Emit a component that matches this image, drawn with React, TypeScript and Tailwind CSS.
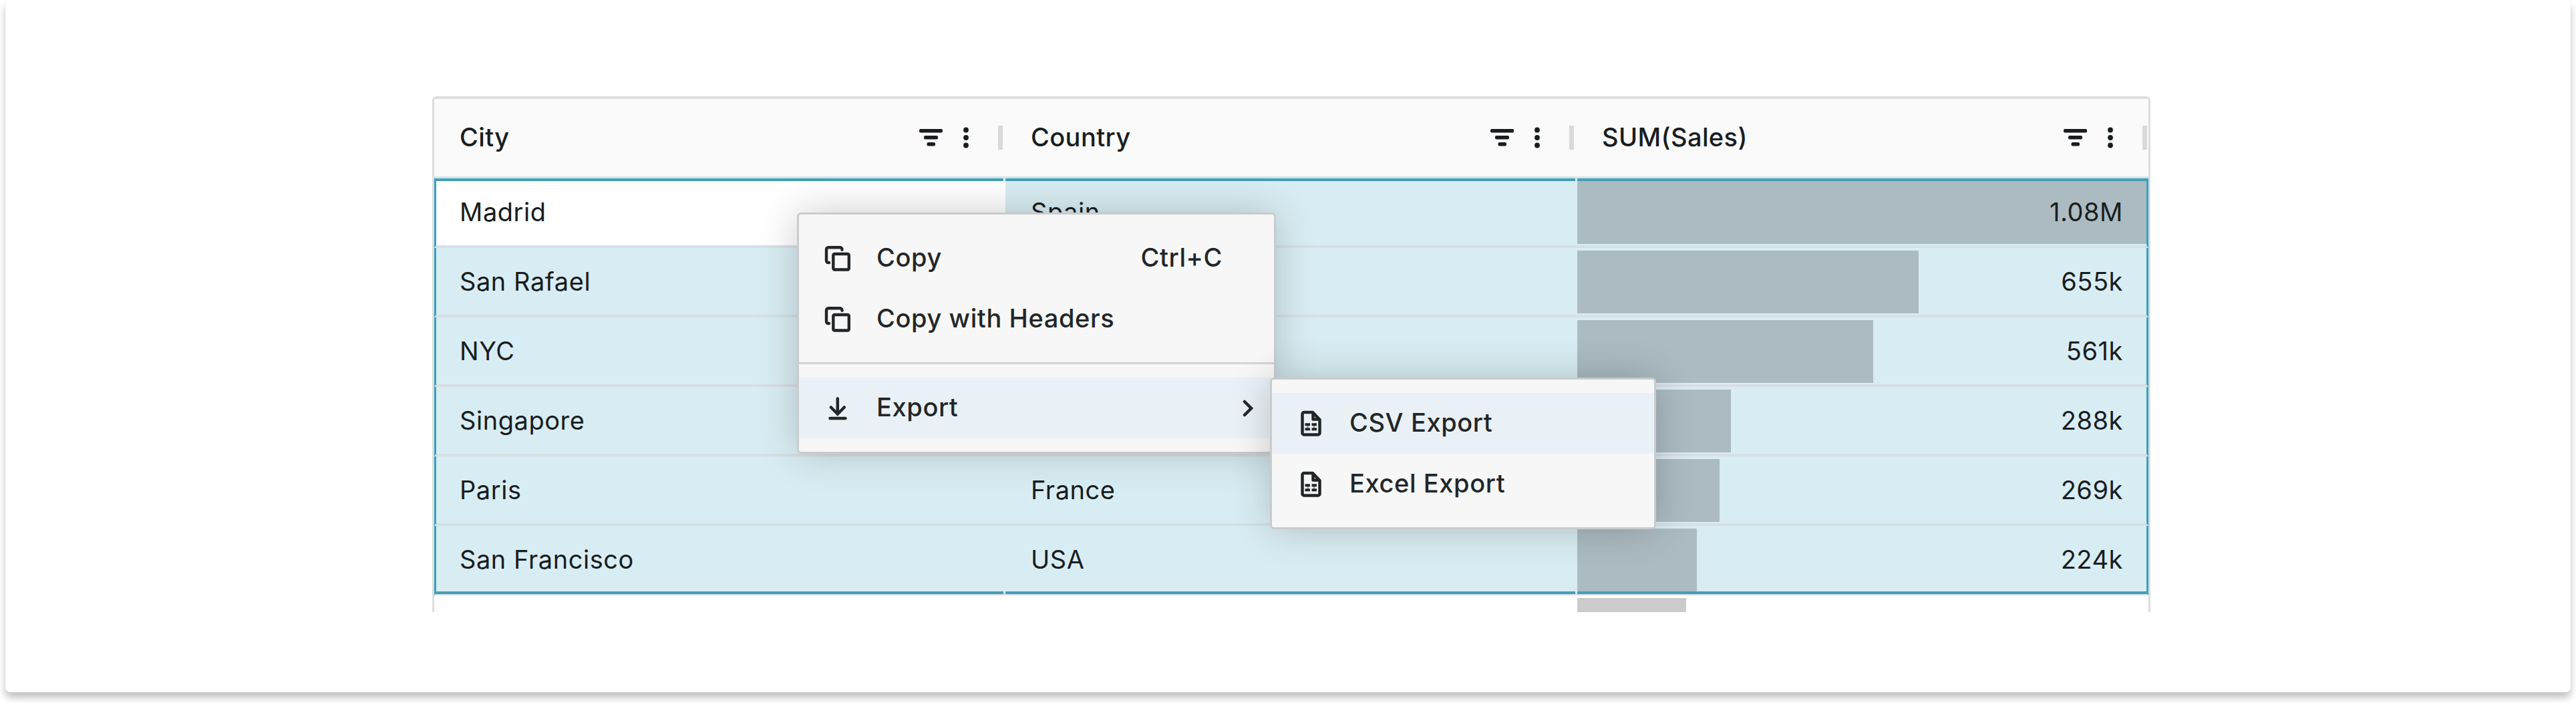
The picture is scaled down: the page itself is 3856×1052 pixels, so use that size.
import React from "react";

const columns = ["City", "Country", "SUM(Sales)"];

const rows = [
  { city: "Madrid", country: "Spain", sales: "1.08M", bar: 852 },
  { city: "San Rafael", country: "USA", sales: "655k", bar: 511 },
  { city: "NYC", country: "USA", sales: "561k", bar: 443 },
  { city: "Singapore", country: "Singapore", sales: "288k", bar: 230 },
  { city: "Paris", country: "France", sales: "269k", bar: 213 },
  { city: "San Francisco", country: "USA", sales: "224k", bar: 179 },
];

const FilterIcon = () => (
  <svg width="36" height="28" viewBox="0 0 36 28" fill="#181d1f">
    <rect x="0" y="1" width="35" height="5.5" rx="2" />
    <rect x="7" y="11" width="21" height="5.5" rx="2" />
    <rect x="11.5" y="21" width="12.5" height="5.5" rx="2" />
  </svg>
);

const DotsIcon = () => (
  <svg width="8" height="32" viewBox="0 0 8 32" fill="#181d1f">
    <circle cx="4" cy="4.5" r="3.9" />
    <circle cx="4" cy="16" r="3.9" />
    <circle cx="4" cy="27.5" r="3.9" />
  </svg>
);

const CopyIcon = () => (
  <svg
    width="40"
    height="40"
    viewBox="0 0 40 40"
    fill="none"
    stroke="#222628"
    strokeWidth="4.4"
    strokeLinecap="round"
  >
    <rect x="13.3" y="13" width="23.5" height="23.5" rx="2" />
    <path d="M7 26H6a3 3 0 0 1-3-3V6.300a3 3 0 0 1 3-3h17.500a3 3 0 0 1 3 3v.5" />
  </svg>
);

const DownloadIcon = () => (
  <svg
    width="40"
    height="40"
    viewBox="0 0 40 40"
    fill="none"
    stroke="#222628"
    strokeWidth="4.5"
    strokeLinecap="round"
  >
    <path d="M19.8 5.5v22M9.8 18.5l10 10 10-10M8.5 35h23" />
  </svg>
);

const SheetIcon = () => (
  <svg
    width="40"
    height="40"
    viewBox="0 0 40 40"
    fill="none"
    stroke="#222628"
    strokeWidth="4.5"
    strokeLinejoin="round"
  >
    <path d="M10 3h13l10.5 11v20a2.5 2.5 0 0 1-2.5 2.5H10A2.5 2.5 0 0 1 7.5 34V5.5A2.5 2.5 0 0 1 10 3Z" />
    <path d="M23.5 4v9.5H33" />
    <path d="M11.5 21.3H19M21.5 21.3H29M11.5 28.3H19M21.5 28.3H29" strokeWidth="4" />
    <path d="M15.5 20v10M25 20v10" strokeWidth="2" strokeOpacity="0.45" />
  </svg>
);

const ChevronIcon = () => (
  <svg
    width="18"
    height="26"
    viewBox="0 0 18 26"
    fill="none"
    stroke="#222628"
    strokeWidth="4.5"
    strokeLinecap="round"
  >
    <path d="M4 3l10 10L4 23" />
  </svg>
);

// teal edge of the selected range, broken between the columns
const RangeEdge = () => (
  <>
    <div className="h-1 w-[852px] bg-[#439fb5]" />
    <div className="h-1 w-[853px] bg-[#439fb5]" />
    <div className="h-1 flex-1 bg-[#439fb5]" />
  </>
);

type MenuItemProps = {
  icon: React.ReactNode;
  label: string;
  shortcut?: string;
  active?: boolean;
  arrow?: boolean;
};

const MenuItem = ({ icon, label, shortcut, active, arrow }: MenuItemProps) => (
  <div
    className={
      active
        ? "flex h-[91px] items-center bg-[#e9f1f6] pl-[38px] pr-[30px]"
        : "flex h-[91px] items-center pl-[38px] pr-[77px]"
    }
  >
    {icon}
    <span className="ml-[38px] pb-[3px]">{label}</span>
    {shortcut && <span className="ml-auto pb-[3px]">{shortcut}</span>}
    {arrow && (
      <span className="ml-auto">
        <ChevronIcon />
      </span>
    )}
  </div>
);

const App = () => {
  return (
    <div className="h-[1052px] w-[3856px] overflow-hidden bg-white px-2 font-['Inter',sans-serif] text-[38px] leading-none tracking-[0.55px] text-[#181d1f]">
      <div className="relative h-[1036px] rounded-lg bg-white pl-[639px] pt-[144px] shadow-[0_8px_12px_rgba(0,0,0,0.25)]">
        <div className="h-[772px] w-[2572px] overflow-hidden rounded-t-md border-x-3 border-t-4 border-[#dddddd]">
          <div className="flex h-[119px] border-b-3 border-[#cfe3ea] bg-[#fafafa] font-medium tracking-[0.4px]">
            {columns.map((name) => (
              <div
                key={name}
                className="flex w-[855px] shrink-0 items-center pl-[38px] pr-1 last:w-[858px]"
              >
                <span className="pb-[3px]">{name}</span>
                <div className="ml-auto flex items-center">
                  <FilterIcon />
                  <span className="ml-[30px]">
                    <DotsIcon />
                  </span>
                  <span className="ml-11 h-9 w-[7px] bg-[#d9d9d9]" />
                </div>
              </div>
            ))}
          </div>
          <div className="relative">
            {rows.map((row, index) => (
              <div
                key={row.city}
                className="flex h-[104px] border-x-3 border-b-4 border-x-[#35a3bd] border-b-[#d8dfe4] bg-[#d8edf3]"
              >
                <div
                  className={
                    index === 0
                      ? "flex w-[852px] items-center bg-white pl-[35px]"
                      : "flex w-[852px] items-center pl-[35px]"
                  }
                >
                  <span className="pb-px">{row.city}</span>
                </div>
                <div className="flex w-[856px] items-center pl-[38px]">
                  <span className="pb-px">{row.country}</span>
                </div>
                <div className="grid flex-1 items-center">
                  <div
                    className="col-start-1 row-start-1 mt-0.5 h-[94px] max-w-full bg-[#abbbc1]"
                    style={{ width: row.bar }}
                  />
                  <span className="col-start-1 row-start-1 pb-px pr-[35px] text-right">
                    {row.sales}
                  </span>
                </div>
              </div>
            ))}
            <div className="absolute inset-x-0 top-0 flex gap-[3px]">
              <RangeEdge />
            </div>
            <div className="absolute inset-x-0 bottom-[2px] flex gap-[3px]">
              <RangeEdge />
            </div>
          </div>
          <div className="ml-[1711px] mt-1 h-[30px] w-[163px] bg-[#cbcbcb]" />
        </div>

        <div className="absolute left-[1185px] top-[318px] h-[361px] w-[717px] rounded-md border-3 border-[#c9cbcc] bg-[#f7f7f7] pt-5 font-medium tracking-[0.6px] text-[#222628] shadow-[0_0_60px_rgba(0,0,0,0.2)]">
          <MenuItem icon={<CopyIcon />} label="Copy" shortcut="Ctrl+C" />
          <MenuItem icon={<CopyIcon />} label="Copy with Headers" />
          <div className="mb-5 mt-[19px] h-[3px] bg-[#d2d4d5]" />
          <MenuItem icon={<DownloadIcon />} label="Export" active arrow />
        </div>

        <div className="absolute left-[1893px] top-[565px] h-[227px] w-[578px] rounded-md border-3 border-[#c9cbcc] bg-[#f7f7f7] pt-5 font-medium tracking-[0.6px] text-[#222628] shadow-[0_0_60px_rgba(0,0,0,0.2)]">
          <MenuItem icon={<SheetIcon />} label="CSV Export" active />
          <MenuItem icon={<SheetIcon />} label="Excel Export" />
        </div>
      </div>
    </div>
  );
};

export default App;
